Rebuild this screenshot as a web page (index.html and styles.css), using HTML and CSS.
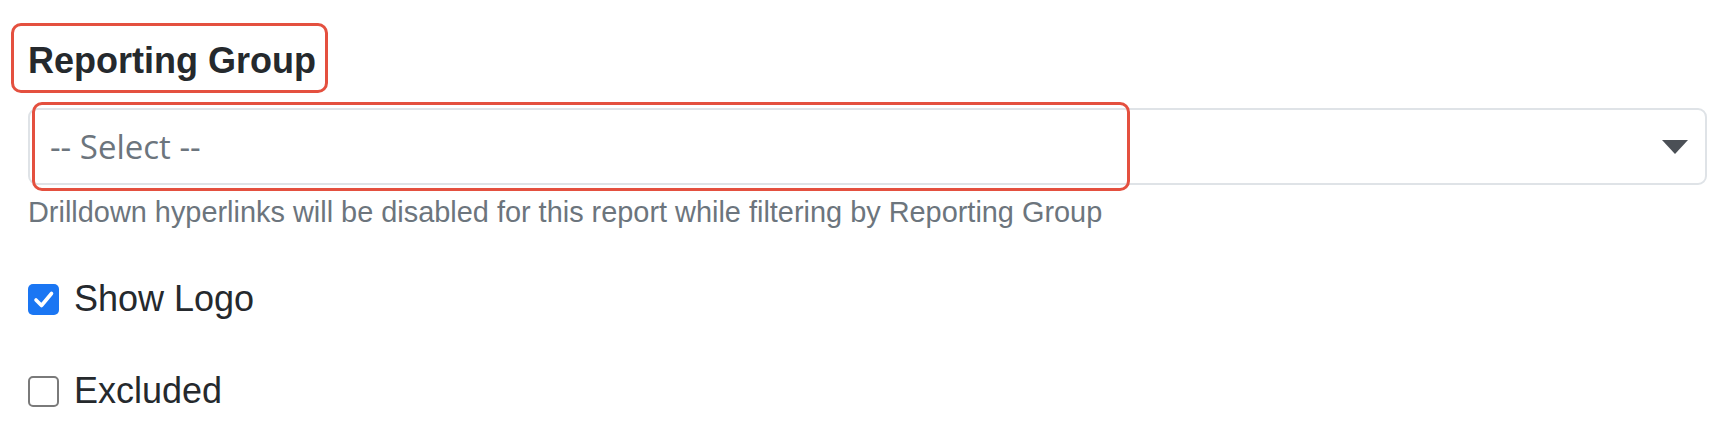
FILE: index.html
```html
<!DOCTYPE html>
<html>
<head>
<meta charset="utf-8">
<link rel="stylesheet" href="styles.css">
</head>
<body>
<div class="form">
  <div class="group">
    <label class="group-label">Reporting Group</label>
    <div class="select">
      <span class="placeholder">-- Select --</span>
      <span class="caret"></span>
    </div>
    <div class="help">Drilldown hyperlinks will be disabled for this report while filtering by Reporting Group</div>
    <span class="mark mark-label"></span>
    <span class="mark mark-select"></span>
  </div>
  <div class="check">
    <span class="box box-on">
      <svg width="31" height="31" viewBox="0 0 31 31"><polyline points="8,16 13.5,21.5 23.5,9.5" fill="none" stroke="#fff" stroke-width="3.6" stroke-linecap="round" stroke-linejoin="round"/></svg>
    </span>
    <span class="check-text">Show Logo</span>
  </div>
  <div class="check">
    <span class="box"></span>
    <span class="check-text">Excluded</span>
  </div>
</div>
</body>
</html>
```
FILE: styles.css
```css
html, body {
  margin: 0;
  padding: 0;
  background: #ffffff;
}
body {
  font-family: "Liberation Sans", Arial, sans-serif;
  color: #212529;
}
.form {
  padding: 34px 22px 0 28px;
}
.group {
  position: relative;
}
.group-label {
  display: block;
  font-size: 36px;
  font-weight: bold;
  line-height: 54px;
  margin-bottom: 20px;
  color: #25292d;
}
.select {
  height: 77px;
  box-sizing: border-box;
  border: 2px solid #dfe3e7;
  border-radius: 9px;
  display: flex;
  align-items: center;
  justify-content: space-between;
  padding: 0 17px 0 20px;
}
.placeholder {
  font-family: "Open Sans", "Noto Sans", sans-serif;
  font-size: 33px;
  color: #6c757d;
}
.caret {
  width: 0;
  height: 0;
  border-left: 13.5px solid transparent;
  border-right: 13.5px solid transparent;
  border-top: 14px solid #4b5056;
  margin-top: 1px;
}
.help {
  margin-top: 6px;
  font-size: 28.9px;
  line-height: 43px;
  color: #6c757d;
}
.mark {
  position: absolute;
  border: 3.5px solid #e4503f;
  border-radius: 10px;
  box-sizing: border-box;
}
.mark-label {
  left: -17px;
  top: -11px;
  width: 317px;
  height: 70px;
}
.mark-select {
  left: 4px;
  top: 68px;
  width: 1098px;
  height: 89px;
}
.check {
  display: flex;
  align-items: center;
  gap: 15px;
  height: 54px;
  margin-top: 38px;
}
.check:first-of-type {
  margin-top: 41px;
}
.box {
  width: 31px;
  height: 31px;
  box-sizing: border-box;
  border: 2.5px solid #7a7a7a;
  border-radius: 5px;
  background: #fff;
  flex: none;
}
.box-on {
  background: #1a76f3;
  border: none;
}
.box svg {
  display: block;
}
.check-text {
  font-size: 36px;
  line-height: 54px;
  color: #25292d;
}
```
